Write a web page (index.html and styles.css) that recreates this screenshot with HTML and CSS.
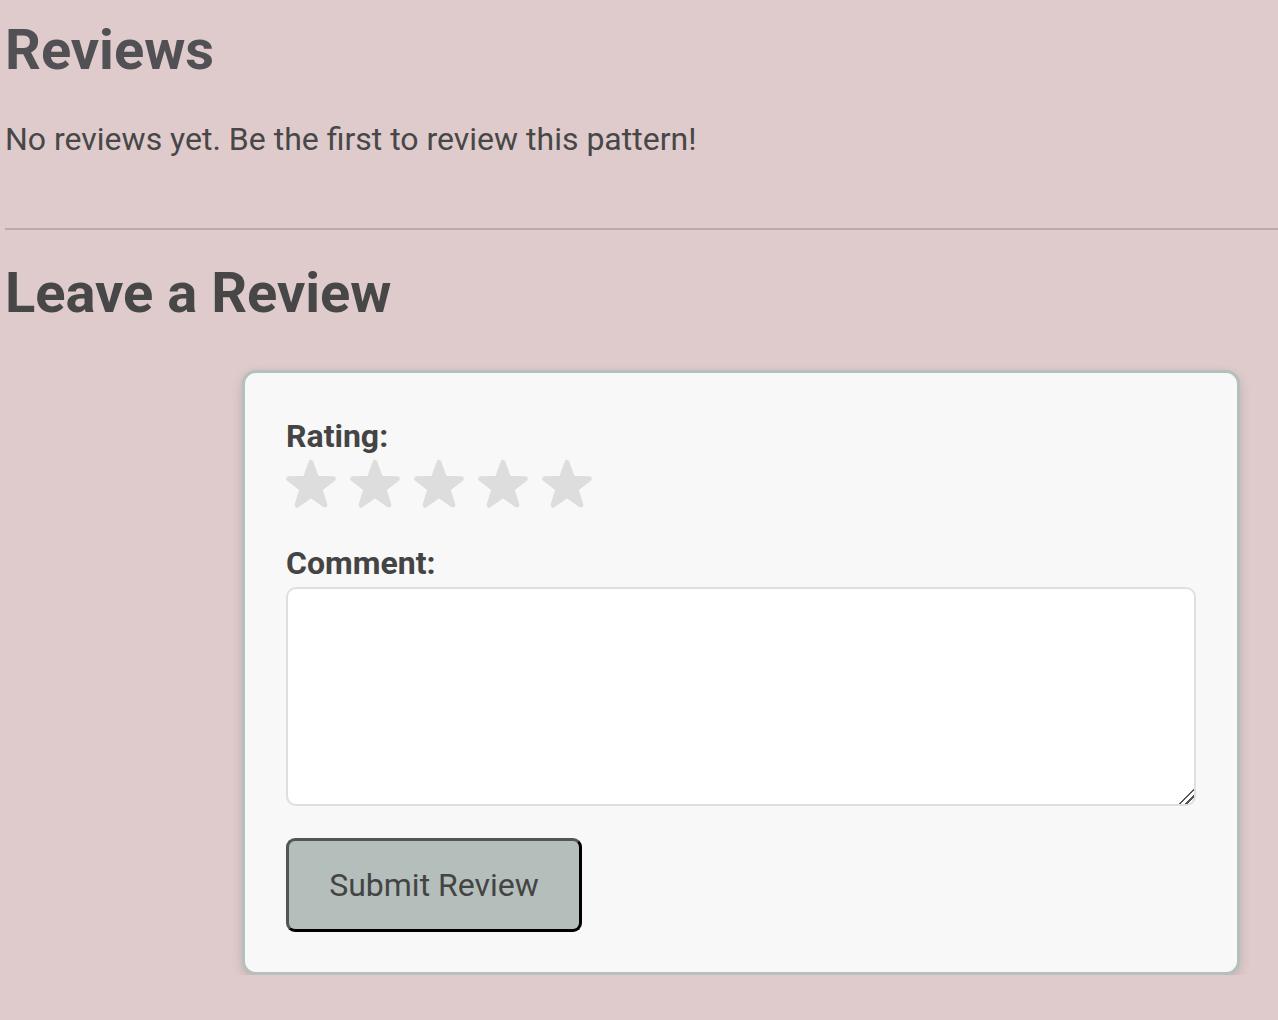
FILE: index.html
```html
<!DOCTYPE html>
<html lang="en">
<head>
<meta charset="utf-8">
<title>Reviews</title>
<link rel="stylesheet" href="styles.css">
</head>
<body>
<main class="page">
  <section class="reviews">
    <h2 class="reviews-title">Reviews</h2>
    <p class="empty">No reviews yet. Be the first to review this pattern!</p>
  </section>
  <hr class="divider">
  <section class="leave">
    <h2 class="leave-title">Leave a Review</h2>
    <form class="card">
      <label class="label">Rating:</label>
      <div class="stars">
        <svg class="star" viewBox="0 0 50 48" width="50" height="48"><polygon points="25,2.5 30.58,18.31 47.35,18.74 34.04,28.94 38.81,45.01 25,35.5 11.19,45.01 15.96,28.94 2.65,18.74 19.42,18.31"/></svg>
        <svg class="star" viewBox="0 0 50 48" width="50" height="48"><polygon points="25,2.5 30.58,18.31 47.35,18.74 34.04,28.94 38.81,45.01 25,35.5 11.19,45.01 15.96,28.94 2.65,18.74 19.42,18.31"/></svg>
        <svg class="star" viewBox="0 0 50 48" width="50" height="48"><polygon points="25,2.5 30.58,18.31 47.35,18.74 34.04,28.94 38.81,45.01 25,35.5 11.19,45.01 15.96,28.94 2.65,18.74 19.42,18.31"/></svg>
        <svg class="star" viewBox="0 0 50 48" width="50" height="48"><polygon points="25,2.5 30.58,18.31 47.35,18.74 34.04,28.94 38.81,45.01 25,35.5 11.19,45.01 15.96,28.94 2.65,18.74 19.42,18.31"/></svg>
        <svg class="star" viewBox="0 0 50 48" width="50" height="48"><polygon points="25,2.5 30.58,18.31 47.35,18.74 34.04,28.94 38.81,45.01 25,35.5 11.19,45.01 15.96,28.94 2.65,18.74 19.42,18.31"/></svg>
      </div>
      <label class="label comment-label" for="comment">Comment:</label>
      <textarea id="comment" class="comment"></textarea>
      <div class="actions">
        <button type="button" class="submit">Submit Review</button>
      </div>
    </form>
  </section>
</main>
</body>
</html>
```
FILE: styles.css
```css
html, body {
  margin: 0;
  padding: 0;
  background: #dfcbcc;
}
body {
  font-family: Roboto, "Liberation Sans", sans-serif;
  color: #474747;
  overflow: hidden;
}
.page {
  padding: 17px 0 0 5px;
}
.reviews-title,
.leave-title {
  margin: 0;
  font-size: 56px;
  line-height: 67px;
  font-weight: 700;
}
.reviews-title {
  color: #515055;
}
.leave-title {
  color: #474747;
}
.empty {
  margin: 36px 0 0;
  font-size: 32px;
  line-height: 38px;
  color: #474747;
}
.divider {
  margin: 70px 0 0;
  border: 0;
  height: 2px;
  background: #baaaac;
}
.leave {
  padding-top: 30px;
}
.card {
  margin: 43px 0 0 237px;
  width: 998px;
  box-sizing: border-box;
  background: #f8f8f8;
  border: 3px solid #b4c0bb;
  border-radius: 14px;
  box-shadow: 0 4px 12px rgba(0, 0, 0, 0.14);
  padding: 44px 41px 40px;
  display: flex;
  flex-direction: column;
}
.label {
  display: block;
  font-size: 32px;
  line-height: 38px;
  font-weight: 700;
  color: #444;
}
.stars {
  display: flex;
  gap: 14px;
  margin-top: 5px;
}
.star {
  display: block;
}
.star polygon {
  fill: #dddddd;
  stroke: #dddddd;
  stroke-width: 5;
  stroke-linejoin: round;
}
.comment-label {
  margin-top: 36px;
}
.comment {
  margin-top: 5px;
  height: 219px;
  min-height: 219px;
  flex: 0 0 219px;
  box-sizing: border-box;
  border: 2px solid #dedfe2;
  border-radius: 10px;
  background: #fff;
  font-family: inherit;
  font-size: 20px;
  padding: 10px;
  display: block;
  width: 100%;
}
.comment::-webkit-resizer {
  background: linear-gradient(135deg, transparent 0 48%, #555 48% 56%, transparent 56% 70%, #555 70% 78%, transparent 78%);
}
.actions {
  margin-top: 32px;
  display: flex;
}
.submit {
  height: 94px;
  width: 296px;
  box-sizing: border-box;
  background: #b4bfbb;
  border: 3px solid;
  border-color: #555 #000 #000 #555;
  border-radius: 9px;
  font-family: Roboto, "Liberation Sans", sans-serif;
  font-size: 32px;
  color: #444;
  padding: 0;
}
```
